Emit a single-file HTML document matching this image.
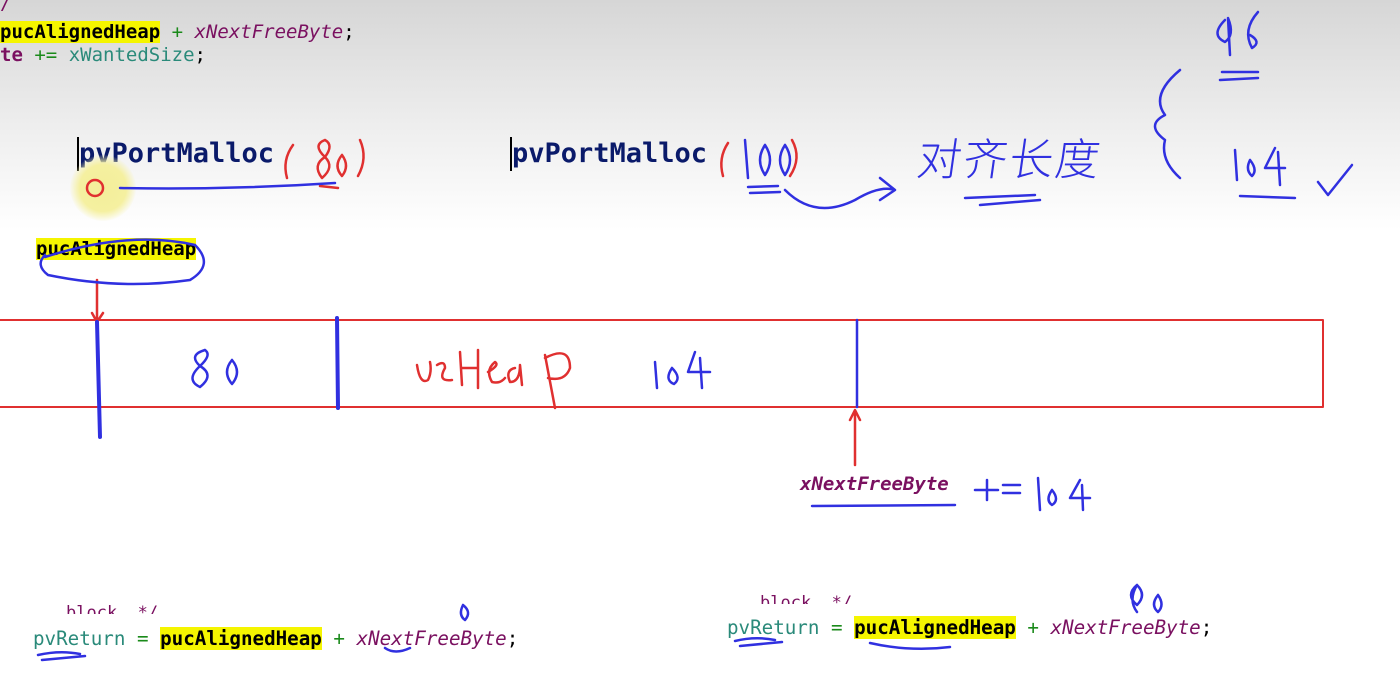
<!DOCTYPE html>
<html><head><meta charset="utf-8"><style>
html,body{margin:0;padding:0;width:1400px;height:697px;overflow:hidden;background:#fff;font-family:"Liberation Mono",monospace}
.bg{position:absolute;left:0;top:0;width:1400px;height:230px;background:linear-gradient(#d6d6d6,#eeeeee 55%,#fff)}
.t{position:absolute;font-family:"DejaVu Sans Mono","Liberation Mono",monospace;white-space:pre}
.hl{background:#f5f500;color:#000;font-weight:bold}
.pu{color:#7a1060;font-style:italic}
.te{color:#2a8a7a}
.gr{color:#1a8a1a}
</style></head><body>
<div class="bg"></div>
<div class="t" style="left:0;top:-8px;font-size:19px;color:#7a1060">/</div>
<div class="t" style="left:0;top:21px;font-size:19px"><span class="hl">pucAlignedHeap</span> <span class="gr">+</span> <span class="pu">xNextFreeByte</span>;</div>
<div class="t" style="left:0;top:44px;font-size:19px"><span class="pu" style="font-style:normal;font-weight:bold">te</span> <span class="gr">+=</span> <span class="te">xWantedSize</span>;</div>
<div class="t" style="left:77px;top:137px;font-size:27px;font-weight:bold;color:#0a1a6a;border-left:2px solid #000;line-height:34px">pvPortMalloc</div>
<div class="t" style="left:510px;top:137px;font-size:27px;font-weight:bold;color:#0a1a6a;border-left:2px solid #000;line-height:34px">pvPortMalloc</div>
<div style="position:absolute;left:70px;top:155px;width:66px;height:66px;border-radius:50%;background:radial-gradient(#f3ee9a,#f5f0a0 50%,rgba(245,240,160,0) 72%)"></div>
<div class="t" style="left:36px;top:238px;font-size:19px"><span class="hl">pucAlignedHeap</span></div>
<div class="t" style="left:800px;top:473px;font-size:19px;font-weight:bold" ><span class="pu">xNextFreeByte</span></div>
<div class="t" style="left:66px;top:600px;font-size:17px;color:#7a1060;height:14px;overflow:hidden;line-height:26px">block. */</div>
<div class="t" style="left:760px;top:590px;font-size:17px;color:#7a1060;height:14px;overflow:hidden;line-height:26px">block. */</div>
<div class="t" style="left:33px;top:627px;font-size:19.2px"><span class="te">pvReturn</span> <span class="gr">=</span> <span class="hl">pucAlignedHeap</span> <span class="gr">+</span> <span class="pu">xNextFreeByte</span>;</div>
<div class="t" style="left:727px;top:616px;font-size:19.2px"><span class="te">pvReturn</span> <span class="gr">=</span> <span class="hl">pucAlignedHeap</span> <span class="gr">+</span> <span class="pu">xNextFreeByte</span>;</div>
<svg width="1400" height="697" style="position:absolute;left:0;top:0" fill="none" stroke-linecap="round" stroke-linejoin="round">
<g stroke="#e03030" stroke-width="2.5">
<rect x="-5" y="320" width="1328" height="87" stroke-width="2"/>
<path d="M293 145 Q282 160 287 178"/><path d="M360 140 Q368 158 358 176"/>
<path d="M325 140 Q312 145 325 157 Q335 167 322 178 Q312 165 325 157 Q334 145 325 140"/>
<path d="M342 155 Q333 166 342 176 Q350 166 342 155"/>
<path d="M728 143 Q718 158 723 176"/><path d="M792 140 Q802 158 790 176"/>
<circle cx="95" cy="188" r="8"/>
<path d="M320 186 L338 188"/>
<path d="M97 280 L97 320 M92 313 L97 322 L103 313"/>
<path d="M855 465 L855 413 M850 420 L855 410 L860 420"/>
<path d="M417 365 Q420 385 428 380 Q432 372 430 362 M437 365 Q445 360 445 368 Q437 382 452 380 M460 352 L462 385 M462 368 L478 368 M478 350 L478 388 M488 372 Q500 365 495 362 Q485 370 492 382 Q500 384 505 378 M515 368 Q505 370 510 382 Q520 382 520 365 L522 385 M545 355 L555 408 M545 358 Q570 345 570 368 Q565 382 548 378"/>
</g>
<g stroke="#3030e0" stroke-width="2.5">
<path d="M97 322 L100 437" stroke-width="4"/><path d="M337 318 L338 408" stroke-width="4"/>
<path d="M857 320 L857 407" stroke-width="2.5"/>
<path d="M120 188 Q230 190 335 183"/>
<path d="M45 257 Q130 230 195 245 Q215 265 190 280 Q120 290 48 275 Q35 265 45 255"/>
<path d="M205 350 Q188 355 200 366 Q215 375 200 387 Q185 380 200 366 Q212 355 205 350 M232 360 Q222 372 232 384 Q242 372 232 360"/>
<path d="M655 362 L657 388 M672 368 Q664 380 674 384 Q682 378 672 368 M695 352 L688 372 L710 372 M700 358 L702 388"/>
<path d="M745 140 L748 178 M765 145 Q755 160 765 175 Q775 160 765 145 M785 145 Q775 160 785 175 Q795 160 785 145"/>
<path d="M748 187 L778 186 M750 193 L780 192"/>
<path d="M785 190 Q815 220 855 200 Q880 185 895 190 M880 178 L895 190 L880 200"/>
<path d="M1180 70 Q1150 95 1165 115 Q1145 125 1165 140 Q1160 160 1180 178"/>
<path d="M1225 20 Q1210 35 1225 42 Q1235 35 1228 18 L1230 55 M1258 12 Q1242 30 1252 48 Q1262 42 1250 35"/>
<path d="M1222 72 L1258 72 M1220 80 L1258 78"/>
<path d="M1235 150 L1237 180 M1250 160 Q1245 170 1252 176 Q1258 170 1250 160 M1275 148 L1265 168 L1285 168 M1278 152 L1280 185"/>
<path d="M1240 196 L1295 198"/>
<path d="M1318 182 L1328 195 L1352 165"/>
<path d="M965 198 L1035 195 M980 205 L1040 200"/>
<path d="M812 506 L955 505"/>
<path d="M975 490 L998 490 M987 480 L987 500 M1003 485 L1020 485 M1003 493 L1020 493 M1038 478 L1040 510 M1052 490 Q1045 500 1052 505 Q1060 500 1052 490 M1080 480 L1070 498 L1090 498 M1082 485 L1083 510"/>
<path d="M463 605 Q458 615 465 620 Q472 612 463 605"/>
<path d="M1137 585 Q1125 595 1137 605 Q1147 595 1137 585 Q1128 600 1137 612 M1158 595 Q1150 605 1158 612 Q1165 605 1158 595"/>
<path d="M38 655 Q60 650 80 654 M42 660 L85 656"/>
<path d="M385 648 Q395 655 410 648"/>
<path d="M735 641 Q755 636 775 640 M740 646 L782 642"/>
<path d="M870 643 Q910 652 950 647"/>
</g>
</svg>
<div style="position:absolute;left:918px;top:124px;font-family:'Noto Sans CJK SC',sans-serif;font-size:44px;color:#3030e0;letter-spacing:2px;font-weight:300;transform:skewX(-8deg)">对齐长度</div>
</body></html>
